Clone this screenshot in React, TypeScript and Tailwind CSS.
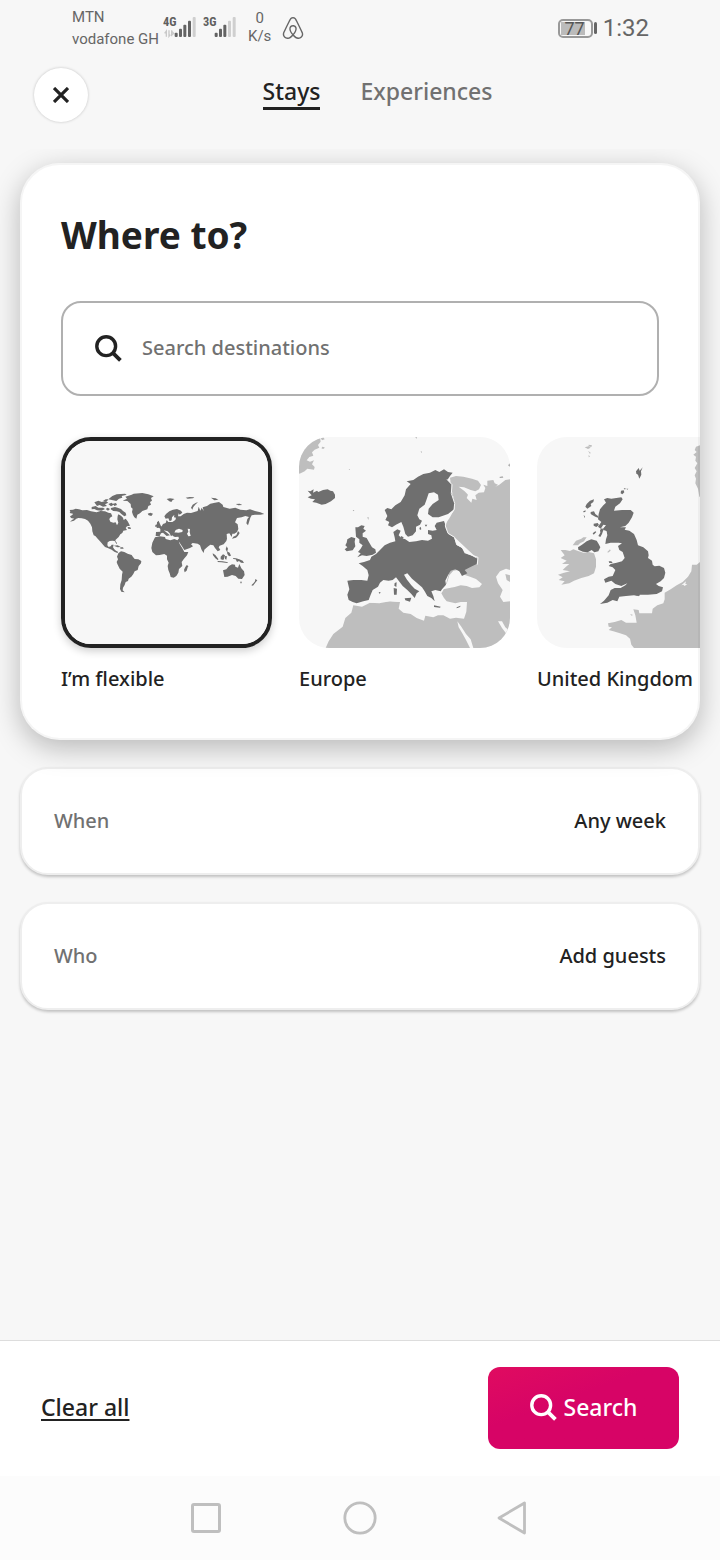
import React from 'react';
import { SiAirbnb } from 'react-icons/si';

const SANS = "font-['Noto_Sans',sans-serif]";

function SearchIcon({ className }: { className: string }) {
  return (
    <svg viewBox="0 0 27 27" className={className} fill="none" stroke="currentColor" strokeWidth="3.4" aria-hidden="true">
      <circle cx="11.2" cy="11.2" r="9.4" />
      <path d="M17.8 17.8 L25.4 25.4" strokeWidth="3.8" />
    </svg>
  );
}

function Signal({ label, level, transfer }: { label: string; level: number; transfer?: boolean }) {
  const bars = [
    [375, 98],
    [388, 86],
    [401, 74],
    [415, 62],
    [429, 51],
  ];
  return (
    <svg viewBox="336 48 105 66" className="h-[22px] w-[35px] shrink-0" role="img" aria-label={`${label} signal`}>
      <text x="336" y="79" fontSize="37" fontWeight="700" fill="#5f5f5f" fontFamily="'Roboto Condensed', Roboto, sans-serif">
        {label}
      </text>
      {transfer && (
        <path d="M346 110V93l-5 7M354 91v18l4-5M362 91v18M362 94l6 6-6 5" fill="none" stroke="#c9c9c9" strokeWidth="4" />
      )}
      {bars.map(([x, y], i) => (
        <rect key={x} x={x - 4} y={y} width="9" height={111 - y} rx="3" fill={i < level ? '#636363' : '#cfcfcf'} />
      ))}
    </svg>
  );
}

function StatusBar() {
  return (
    <div className="flex h-[56px] items-start justify-between pl-[72px] pr-[71px] font-[Roboto,sans-serif] text-[#666]">
      <div className="flex items-start">
        <div className="pt-1.5 text-[15px] leading-[22px]">
          <div>MTN</div>
          <div>vodafone GH</div>
        </div>
        <div className="ml-1 flex gap-[5px] pt-4">
          <Signal label="4G" level={4} transfer />
          <Signal label="3G" level={3} />
        </div>
        <div className="ml-2.5 pt-[9px] text-center text-[15px] leading-[18px]">
          <div>0</div>
          <div>K/s</div>
        </div>
        <SiAirbnb className="ml-[11px] mt-[17px] size-[22px]" aria-label="Airbnb" />
      </div>
      <div className="flex items-center pt-[13px]">
        <div className="flex h-[19px] w-[35px] rounded-[5px] border-2 border-[#999] p-px">
          <div className="flex h-full w-6 items-center justify-end bg-[#bbb] text-[18px] text-[#555]">77</div>
        </div>
        <div className="ml-px h-3 w-[3px] rounded-sm bg-[#666]" />
        <div className="ml-1.5 text-[24px] leading-[30px]">1:32</div>
      </div>
    </div>
  );
}

function WorldMap() {
  return (
    <svg viewBox="30 33 609 609" className="block size-full bg-[#f7f7f7]" fill="#6e6e6e" aria-hidden="true">
      <path d="M44 240L54 239 62 236 72 238 82 241 96 240 108 244 125 247 136 243 150 244 160 248 168 250 172 259 165 263 163 268 166 275 175 278 182 277 186 286 190 278 187 268 188 258 190 253 198 257 204 263 206 270 212 266 218 274 222 281 225 287 216 289 212 294 216 300 205 302 202 309 196 313 191 321 182 329 181 333 186 339 185 343 179 333 172 332 164 333 158 337 157 346 161 351 167 349 170 344 176 344 174 352 178 358 183 362 190 366 187 369 178 365 170 359 160 355 150 351 144 344 137 336 128 326 121 318 116 316 112 304 111 292 106 281 99 272 90 267 80 265 70 264 64 266 57 272 45 275 52 269 58 266 48 264 45 259 52 255 54 251 44 249 46 245Z" />
      <path d="M203 212L216 206 211 200 230 194 236 191 262 189 280 193 296 199 288 204 291 212 285 216 288 224 280 228 277 238 262 243 255 250 247 254 244 266 238 262 234 255 231 246 233 236 228 232 227 222 217 213Z" />
      <path d="M160 208L172 198 185 193 210 191 215 194 200 198 202 203 192 206 184 213 174 211ZM118 217l12-5 10 4 12-3 8 5-10 5 6 5-12 2-10-5-8 3zM110 231l12-3 8 5 14 0 6 4-10 5-14-1-8-4-8 1zM160 222l10-4 6 6-8 5zM174 221l9-2 3 6-8 3zM168 234l12-3 8 2 10 4 6 6 8 5 2 8-6 3-9-7-6-6-8-2-10-1-8-5zM144 213l8-5 8 0-4 6zM152 237l6-4 7 4-6 5zM278 251l8-3 8 3-5 7-8-2z" />
      <path d="M218 291l8 1 2 5-9-1zM176 347l12-1 9 5-9 1zM196 351l8 1 2 4-10 0z" />
      <path d="M190 370L198 364 208 366 218 371 230 375 234 381 239 387 250 388 259 393 258 400 251 408 248 420 239 424 235 432 229 440 221 446 219 453 212 456 209 465 204 473 203 481 209 487 199 485 195 477 196 463 200 450 201 434 203 425 194 416 187 402 185 396 189 388 186 380Z" />
      <path d="M302 318L303 306 316 305 316 297 311 292 320 289 324 282 332 279 335 270 340 276 352 276 361 270 363 263 357 262 358 254 351 262 350 271 344 274 340 265 332 266 328 259 333 252 343 244 354 239 366 237 378 242 382 248 374 254 371 250 369 259 377 259 386 252 396 248 408 249 418 246 428 243 431 230 436 242 440 233 446 243 443 232 456 228 466 221 480 218 492 216 503 224 505 231 524 236 541 233 556 239 574 241 585 238 600 243 616 247 628 252 616 254 600 254 590 256 586 263 583 273 579 286 574 280 577 267 582 261 571 258 560 262 546 264 540 277 548 283 550 297 546 306 538 311 532 311 530 321 523 310 515 312 516 326 514 333 506 343 494 347 491 352 496 360 488 364 480 354 475 346 466 344 458 350 448 359 446 369 440 360 435 346 428 341 413 339 408 343 414 349 405 354 388 360 380 347 372 335 366 332 372 325 370 320 360 321 352 317 358 307 370 308 382 306 383 300 372 296 362 300 356 312 348 319 344 310 338 304 326 301 334 307 345 316 335 318 324 308 318 310 314 318Z" />
      <path d="M398 296l7 1-1 9 3 12-7 1-4-8 4-6z" fill="#f7f7f7" />
      <path d="M306 277l5-5 3 8 5 10-4 3-10 1zM301 285l5-2-1 7-4 1z" />
      <path d="M300 322L314 319 330 321 332 327 346 331 358 327 371 332 374 342 382 355 388 366 400 366 396 376 387 386 380 396 382 408 372 417 370 428 364 438 356 443 347 441 344 430 340 420 338 408 341 398 336 388 336 377 328 372 314 375 303 376 292 366 289 354 292 338Z" />
      <path d="M396 404l3 5-4 13-6 5-2-8 4-8z" />
      <path d="M335 207l10-2 14 2-6 3-4 6-6-2zM392 203l12-2 14 1-4 3-16 1zM408 233l5-9 10-6 6-1-7 6-7 8-3 8zM468 203l14 2 8 4-12 2zM542 222l12-1 8 4-12 1z" />
      <path d="M549 303l5 6-5 8-6 6-12 3 4-6 9-4 3-8zM515 349l4 7-3 10-4-8zM516 364l8 4 4 9-6 2-5-7zM473 370l8 5 9 12-1 4-8-6-7-9zM497 380l7-7 6 3-2 8-3 6-8-2zM510 378l6 1-2 10-4-2zM489 393l14 1 16 3-2 2-18-2-12-1zM534 384l9 1 10 3 10 4 4 7-9-1-6-5-6 3-4-8-7-1z" />
      <path d="M504 421L514 418 522 408 531 403 540 404 541 410 549 413 553 402 559 415 567 424 569 435 561 447 550 446 542 438 531 435 518 440 508 441Z" />
      <path d="M555 455l6 0-3 6zM601 447l6 4-5 6-8 10-5-1 7-7 4-5z" />
    </svg>
  );
}

function EuropeMap() {
  return (
    <svg viewBox="27 21 633 633" className="block size-full bg-[#f7f7f7]" fill="#6f6f6f" aria-hidden="true">
      <g fill="#bebebe">
        <path d="M27 21h63l2 14-8 10 4 8-14 6-8 8 4 10-12 4-8 10 10 4 12-4-6 12 8 8-2 8-20-3-8 8-12 6-10 3zM92 24l8-2 4 6-8 3zM96 50l8 2-2 4-7 0z" />
        <path d="M480 143L498 138 520 140 546 146 564 152 573 165 567 178 556 184 542 180 522 172 506 170 524 184 534 194 530 204 544 218 547 206 560 210 556 196 566 188 582 187 586 174 580 164 592 168 592 152 610 150 614 160 624 164 616 170 628 164 646 150 660 148V654H107L116 634 130 612 158 590 166 564 184 548 190 526 216 530 240 518 268 520 300 514 330 516 440 500 458 484 468 462 480 420 560 384 496 324 468 308 468 280 480 262 494 236 490 200 484 178Z" />
      </g>
      <path d="M446 462L470 462 478 436 490 422 504 420 514 430 527 436 540 440 558 447 576 462 568 472 546 474 530 468 512 466 494 471 478 474 460 478 454 490 462 504 470 514 496 520 512 516 531 516 529 545 522 566 498 563 480 566 460 556 444 556 430 562 406 557 402 572 380 564 362 552 340 548 326 536 330 516 300 514 268 516 240 518 240 480 300 440 350 420Z" fill="#f7f7f7" />
      <path d="M618 440L630 424 648 416 660 420V436L646 432 650 450 660 456V514L640 516 630 500 638 480 624 460ZM502 574L514 590 528 612 542 628 550 654H540L528 630 516 608 506 592ZM624 574L636 574 646 592 660 604V620L648 610 636 594Z" fill="#f7f7f7" />
      <path d="M53 182l8 2 10-6-2 10 12-6 4 4 14-6 14-2 8 4 8 2 6 10 0 10-12 10-16 8-12 2-16-6-12-2 8-8-12-2-10-4 12-6z" />
      <path d="M284 240L292 234 304 238 316 226 332 216 344 196 348 178 362 162 350 154 370 150 384 140 400 132 420 128 436 120 448 126 462 118 474 126 488 128 480 138 472 150 484 162 486 190 494 220 492 238 474 252 446 262 428 262 414 252 416 236 428 222 446 210 444 194 432 187 416 190 410 208 404 224 388 236 382 256 388 268 396 272 390 284 378 290 378 304 368 316 354 320 346 312 340 290 334 276 318 284 306 292 294 286 298 276 286 270 292 258Z" />
      <path d="M434 288L440 278 462 273 466 284 468 298 476 312 492 322 500 344 516 354 524 370 540 374 562 386 560 402 540 412 524 420 532 430 516 438 508 424 496 418 482 422 474 436 466 452 468 464 456 478 452 484 436 480 424 484 430 498 434 514 424 504 412 498 404 484 396 472 382 460 366 446 352 430 342 434 350 448 364 466 374 476 388 484 380 490 374 504 364 492 352 480 338 468 326 452 318 442 308 450 296 452 280 450 270 458 264 470 248 480 242 494 236 510 220 514 200 520 188 516 176 510 172 494 178 478 172 452 190 450 214 450 232 452 236 436 232 420 218 408 206 400 222 396 240 390 244 380 258 372 270 360 284 346 300 338 316 334 314 322 310 306 322 298 332 302 326 316 334 324 346 328 358 336 378 334 396 330 414 332 426 326 424 316 414 312 414 300 428 302 440 300Z" />
      <path d="M196 292l8 0 10-6 10 2-4 8 8 6-10 8 0 10 12 4 8 14 8 14 10 6 2 10-10 6-18 4-14-2-14 6 10-12-8-4 8-10 6-10-10-8 0-10-10-8zM172 328l12-7 12 4-2 10 2 14-8 12-18 3-6-6 8-6-6-6 4-8zM344 505l20-2-4 12-14-4zM311 474l10 2-1 18-8 0zM314 459l6-2-1 14-6-4zM266 486l6 1-3 5zM432 526l20 4-2 3-18-2zM500 532l12-5-2 4-10 4zM333 318l8 4-4 6-6-4z" />
      <path d="M471 148L486 164 484 190 494 220 492 240 470 268 466 288 474 310 494 322 500 344 516 352 530 370 564 382 562 404" fill="none" stroke="#f7f7f7" strokeWidth="3" />
      <path d="M388 294l4-4 2 8-4 2zM404 284l8 0-4 6z" />
      <path d="M654 106l6-6v10zM628 141l10-2 2 4-10 1zM188 240l5 0-2 4zM232 262l4 0-1 8zM176 117l3 0 0 4zM392 64l4 1-2 4zM376 22l5 0-2 4z" fill="#a8a8a8" />
    </svg>
  );
}

function UnitedKingdomMap() {
  return (
    <svg viewBox="51 21 633 633" className="block size-full bg-[#f7f7f7]" fill="#6f6f6f" aria-hidden="true">
      <g fill="#bebebe">
        <path d="M684 330L560 384 540 396 530 404 516 404 514 424 504 440 488 456 470 466 452 478 434 488 434 508 430 520 412 526 398 536 396 550 358 550 356 540 340 538 346 556 350 578 318 578 304 570 284 576 264 580 266 590 276 592 266 600 280 604 300 610 318 616 330 626 334 644 342 654H684Z" />
        <path d="M122 360L136 360 150 363 160 358 172 362 190 368 206 366 222 370 228 388 228 410 222 430 206 438 184 444 162 452 148 460 124 464 134 454 116 450 128 442 114 434 132 428 150 424 128 420 138 410 148 402 126 402 140 392 122 384 134 376ZM158 346l10-14 16-6 6-4 10 0-8 12-12 6 -6 6zM194 52l12-3 6 4-8 4zM206 44l10 2-2 5-8-2zM204 62l8 6-2 4zM206 74l4 6-4 2z" />
        <path d="M540 46l-12 4-4 10 6 6-10 8 8 6-2 12 6 8-8 14 6 10-6 12 4 10-2 14 8 16 4 24H684V46zM330 552l8 2-2 4zM262 366l8-8 2 4-8 6z" />
      </g>
      <path d="M484 466l14-12-2 8 6 0-8 6-4-4z" fill="#f7f7f7" />
      <path d="M252 208L262 204 274 206 304 202 308 208 300 220 286 230 282 242 306 240 332 240 341 248 336 262 326 278 316 288 300 292 318 292 314 299 328 302 342 312 350 330 354 346 370 352 384 364 386 376 384 384 396 392 398 404 404 409 418 407 432 414 436 428 432 444 422 454 408 462 416 468 429 472 426 484 410 492 384 494 360 494 352 498 342 496 318 498 298 500 292 514 278 510 262 518 240 522 252 512 266 496 272 480 284 474 302 474 316 466 322 460 304 468 286 462 274 452 256 458 252 448 266 440 278 438 286 420 278 412 266 408 272 402 290 398 306 394 314 384 308 366 298 360 294 348 306 340 296 338 272 338 256 342 258 328 262 316 260 304 248 298 258 286 250 284 242 296 234 290 244 276 234 268 236 252 240 238 250 226 258 218Z" />
      <path d="M174 352l12-8 14-10 14-6 16 4 6 10 5 10-6 12-12 3-8-7-12 7-14-2-14-6zM200 222l10-10 12-4-2 8-8 6 2 6-12 8-6-6zM212 246l10-2 4 8 8 6 2 6-10-4-8-4-6-4zM190 244l7-3-1 5-6 1zM191 254l4 6-2 4zM221 281l12-2 4 6-8 6-8-4zM240 300l6-6 4 6-4 12-5 9-6-3 6-10zM218 310l8-6 3 2-8 8zM303 182l8-1 2 6-6 6-5-3zM311 175l6 0-2 4zM319 176l6 0-3 3zM348 124l8-10 3 8 9-10-5 12 1 10-6 12-4-12-5-3z" />
      <path d="M250 298l12-16 2 4-12 16zM266 394l8 0 4 5-10 0zM352 494l8 2-4 3z" />
    </svg>
  );
}

const destinations = [
  { name: 'I’m flexible', Map: WorldMap, selected: true },
  { name: 'Europe', Map: EuropeMap, selected: false },
  { name: 'United Kingdom', Map: UnitedKingdomMap, selected: false },
];

function DestinationTile({ name, Map, selected }: { name: string; Map: () => React.JSX.Element; selected: boolean }) {
  return (
    <button type="button" aria-pressed={selected} className="w-[211px] shrink-0 text-left">
      <span
        className={
          selected
            ? 'block size-[211px] overflow-hidden rounded-[30px] border-4 border-[#222] shadow-[0_3px_8px_rgba(0,0,0,0.2)]'
            : 'block size-[211px] overflow-hidden rounded-[30px]'
        }
      >
        <Map />
      </span>
      <span className="mt-4 block whitespace-nowrap text-[20px] font-medium leading-[30px] text-[#222]">{name}</span>
    </button>
  );
}

function SummaryRow({ label, value }: { label: string; value: string }) {
  return (
    <button
      type="button"
      className="flex h-[108px] w-full shrink-0 items-center justify-between rounded-[28px] border-2 border-[#eee] bg-white px-8 text-[20px] font-medium shadow-[0_2px_3px_rgba(0,0,0,0.22)]"
    >
      <span className="text-[#717171]">{label}</span>
      <span className="text-[#222]">{value}</span>
    </button>
  );
}

function SystemNav() {
  return (
    <div className="flex h-[84px] items-center justify-center gap-[120px] bg-[#fcfcfc] text-[#bfbfbf]">
      <button type="button" aria-label="Recent apps">
        <svg viewBox="0 0 34 34" className="size-[34px]" fill="none" stroke="currentColor" strokeWidth="3">
          <rect x="3.5" y="3.5" width="27" height="27" rx="1.5" />
        </svg>
      </button>
      <button type="button" aria-label="Home">
        <svg viewBox="0 0 34 34" className="size-[34px]" fill="none" stroke="currentColor" strokeWidth="2.8">
          <circle cx="17" cy="17" r="15.2" />
        </svg>
      </button>
      <button type="button" aria-label="Back">
        <svg viewBox="0 0 34 34" className="size-[34px]" fill="none" stroke="currentColor" strokeWidth="2.8" strokeLinejoin="round">
          <path d="M27.5 2v30L2 17Z" />
        </svg>
      </button>
    </div>
  );
}

export default function App() {
  return (
    <div className={`flex min-h-screen flex-col bg-[#f7f7f7] text-[#222] ${SANS}`}>
      <StatusBar />
      <header className="flex h-[93px] items-start pl-[34px] pr-[53px] pt-3">
        <button
          type="button"
          aria-label="Close"
          className="flex size-[54px] items-center justify-center rounded-full bg-white shadow-[0_0_3px_rgba(0,0,0,0.22)]"
        >
          <svg viewBox="0 0 16 16" className="size-4" stroke="currentColor" strokeWidth="3.2" aria-hidden="true">
            <path d="M1 1L15 15M15 1L1 15" />
          </svg>
        </button>
        <nav className="flex flex-1 justify-center gap-10 pt-2 text-[23px] font-medium leading-[30px]">
          <a href="#stays" aria-current="page" className="h-[34px] border-b-[3px] border-[#222]">
            Stays
          </a>
          <a href="#experiences" className="text-[#717171]">
            Experiences
          </a>
        </nav>
      </header>

      <main className="flex flex-1 flex-col gap-[27px] overflow-hidden px-5 pt-[14px]">
        <section className="relative shrink-0 overflow-hidden rounded-[40px] bg-white px-[41px] pb-[46px] pt-[47px] shadow-[0_8px_28px_rgba(0,0,0,0.26)] after:pointer-events-none after:absolute after:inset-0 after:rounded-[40px] after:border-2 after:border-black/4">
          <h1 className="text-[37px] font-bold leading-[50px]">
            <label htmlFor="destination">Where to?</label>
          </h1>
          <div className="mt-[41px] flex h-[95px] items-center gap-5 rounded-[20px] border-2 border-[#b0b0b0] px-8">
            <SearchIcon className="size-[27px] shrink-0" />
            <input
              id="destination"
              type="text"
              placeholder="Search destinations"
              className="h-10 w-full min-w-0 bg-transparent pb-0.5 text-[20px] font-medium leading-[36px] outline-none placeholder:text-[#717171]"
            />
          </div>
          <div className="-mx-[41px] -mb-3 flex gap-[27px] overflow-hidden pb-3 pl-[41px] pt-[41px]">
            {destinations.map((d) => (
              <DestinationTile key={d.name} {...d} />
            ))}
          </div>
        </section>
        <SummaryRow label="When" value="Any week" />
        <SummaryRow label="Who" value="Add guests" />
      </main>

      <footer className="flex items-center justify-between border-t border-[#ddd] bg-white px-[41px] pb-[27px] pt-[26px]">
        <button type="button" className="pb-0.5 text-[23px] font-medium underline decoration-2 underline-offset-3">
          Clear all
        </button>
        <button
          type="button"
          className="flex h-[82px] w-[191px] items-center justify-center gap-[7px] rounded-xl bg-linear-160 from-[#e00b60] to-[#d70466] to-40% pb-0.5 text-[23px] font-medium text-white"
        >
          <SearchIcon className="size-[27px]" />
          Search
        </button>
      </footer>
      <SystemNav />
    </div>
  );
}
